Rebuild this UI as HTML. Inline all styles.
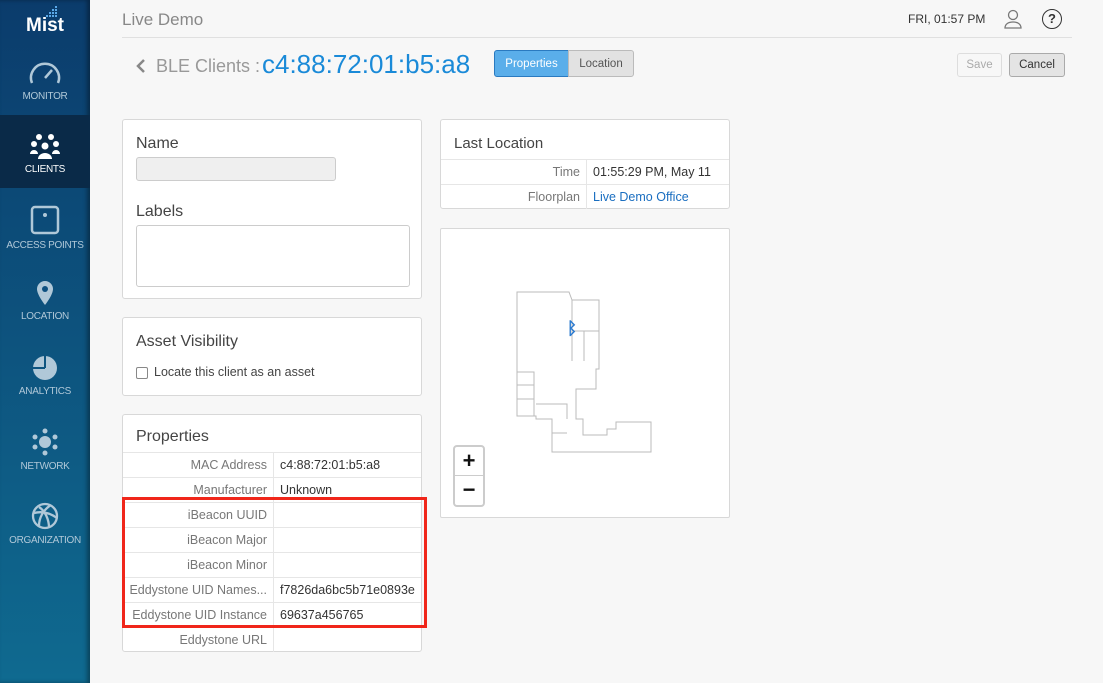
<!DOCTYPE html>
<html><head><meta charset="utf-8"><style>
*{box-sizing:border-box;margin:0;padding:0}
body{width:1103px;height:683px;overflow:hidden;background:#f7f7f7;font-family:"Liberation Sans",sans-serif;position:relative;color:#555}
.sb{position:absolute;left:0;top:0;width:90px;height:683px;background:linear-gradient(#0b3c6c,#0f6a90);box-shadow:inset -3px 0 4px rgba(0,0,0,.35)}
.nav{position:absolute;left:0;width:90px;text-align:center;font-size:10px;color:#b0c8d8;letter-spacing:-.3px}
.nav svg{display:block;margin:0 auto 5px}
.act{background:#0a2a48;color:#fff}
.a{position:absolute}
.panel{position:absolute;background:#fff;border:1px solid #d8d8d8;border-radius:3px}
.h{font-size:16px;color:#444}
.row{position:absolute;left:0;right:0;height:25px;border-top:1px solid #e6e6e6;font-size:12.5px}
.row .l{position:absolute;left:0;text-align:right;color:#777;top:5px}
.row .v{position:absolute;top:5px;color:#333}
.row .sep{position:absolute;top:0;bottom:0;border-left:1px solid #e6e6e6}
.btn{position:absolute;font-size:11.5px;text-align:center;border-radius:3px}
</style></head><body>
<div class="sb">
 <div class="a" style="left:31px;top:5px">
  <svg width="32" height="12"><g fill="#5aa8e8"><rect x="24" y="0" width="2" height="2"/><rect x="24" y="3" width="2" height="2"/><rect x="21" y="3" width="2" height="2"/><rect x="24" y="6" width="2" height="2"/><rect x="21" y="6" width="2" height="2"/><rect x="18" y="6" width="2" height="2"/><rect x="24" y="9" width="2" height="2"/><rect x="21" y="9" width="2" height="2"/><rect x="18" y="9" width="2" height="2"/><rect x="15" y="9" width="2" height="2"/></g></svg>
 </div>
 <div class="a" style="left:26px;top:15px;color:#fff;font-weight:bold;font-size:19px">Mist</div>
 <div class="nav" style="top:58px;height:56px"><svg width="36" height="28" viewBox="0 0 36 28"><path d="M5 25 A14 14 0 1 1 31 25" fill="none" stroke="#b0c8d8" stroke-width="2.5"/><path d="M18 20 L25 12" stroke="#b0c8d8" stroke-width="2.5"/></svg>MONITOR</div>
 <div class="nav act" style="top:115px;height:73px;padding-top:18px"><svg width="32" height="26" viewBox="0 0 32 26" fill="#fff"><circle cx="10" cy="4" r="3"/><circle cx="22" cy="4" r="3"/><circle cx="5" cy="11" r="3"/><circle cx="27" cy="11" r="3"/><circle cx="16" cy="13" r="3.5"/><path d="M1 21a4 4 0 0 1 8 0zM23 21a4 4 0 0 1 8 0zM9 26a7 6 0 0 1 14 0z"/></svg>CLIENTS</div>
 <div class="nav" style="top:205px"><svg width="30" height="30" viewBox="0 0 30 30"><rect x="2" y="2" width="26" height="26" rx="3" fill="none" stroke="#b0c8d8" stroke-width="2.5"/><circle cx="15" cy="10" r="2" fill="#b0c8d8"/></svg>ACCESS POINTS</div>
 <div class="nav" style="top:280px"><svg width="20" height="26" viewBox="0 0 20 26"><path d="M10 1a8 8 0 0 1 8 8c0 6-8 16-8 16S2 15 2 9a8 8 0 0 1 8-8z" fill="#b0c8d8"/><circle cx="10" cy="9" r="3" fill="#0d5080"/></svg>LOCATION</div>
 <div class="nav" style="top:355px"><svg width="26" height="26" viewBox="0 0 26 26"><circle cx="13" cy="13" r="12" fill="#b0c8d8"/><path d="M13 13V0M13 13H0" stroke="#0d5480" stroke-width="2"/></svg>ANALYTICS</div>
 <div class="nav" style="top:428px"><svg width="26" height="28" viewBox="0 0 26 28" fill="#b0c8d8"><circle cx="13" cy="3" r="2.5"/><circle cx="13" cy="25" r="2.5"/><circle cx="3" cy="9" r="2.5"/><circle cx="23" cy="9" r="2.5"/><circle cx="3" cy="19" r="2.5"/><circle cx="23" cy="19" r="2.5"/><circle cx="13" cy="14" r="6"/></svg>NETWORK</div>
 <div class="nav" style="top:502px"><svg width="28" height="28" viewBox="0 0 28 28" fill="none" stroke="#b0c8d8" stroke-width="2.3"><circle cx="14" cy="14" r="12"/><path d="M3 11c8-2 16 0 23 5M8 24c0-8 4-16 12-21M8 5c6 4 10 12 10 21"/></svg>ORGANIZATION</div>
</div>

<div class="a" style="left:122px;top:10px;font-size:17px;color:#888">Live Demo</div>
<div class="a" style="left:908px;top:12px;font-size:12px;color:#333">FRI, 01:57 PM</div>
<svg class="a" style="left:1004px;top:9px" width="18" height="20" viewBox="0 0 18 20" fill="none" stroke="#777" stroke-width="1.3"><circle cx="9" cy="6" r="4.5"/><path d="M1 19c0-4 3.5-6 8-6s8 2 8 6z"/></svg>
<div class="a" style="left:1042px;top:9px;width:20px;height:20px;border:1.6px solid #333;border-radius:50%;text-align:center;font-weight:bold;font-size:13px;line-height:17px;color:#333">?</div>
<div class="a" style="left:122px;top:37px;width:950px;border-top:1px solid #e0e0e0"></div>

<svg class="a" style="left:136px;top:59px" width="10" height="14" viewBox="0 0 10 14"><path d="M8 1L2 7l6 6" fill="none" stroke="#888" stroke-width="2.5"/></svg>
<div class="a" style="left:156px;top:56px;font-size:18px;color:#999">BLE Clients :</div>
<div class="a" style="left:262px;top:49px;font-size:26px;color:#1a8ad8">c4:88:72:01:b5:a8</div>
<div class="btn" style="left:494px;top:50px;width:75px;height:27px;background:#5aaeea;border:1px solid #2a7ac0;color:#fff;line-height:25px;padding-top:1px;border-radius:3px 0 0 3px">Properties</div>
<div class="btn" style="left:568px;top:50px;width:66px;height:27px;background:#e2e2e2;border:1px solid #bbb;color:#555;line-height:25px;padding-top:1px;border-radius:0 3px 3px 0">Location</div>
<div class="btn" style="left:957px;top:53px;width:45px;height:24px;border:1px solid #ddd;color:#aaa;line-height:22px">Save</div>
<div class="btn" style="left:1009px;top:53px;width:56px;height:24px;border:1px solid #aaa;background:#e4e4e4;color:#333;line-height:22px">Cancel</div>

<div class="panel" style="left:122px;top:119px;width:300px;height:180px">
 <div class="a h" style="left:13px;top:15px">Name</div>
 <div class="a" style="left:13px;top:37px;width:200px;height:24px;background:#efefef;border:1px solid #ccc;border-radius:3px"></div>
 <div class="a h" style="left:13px;top:83px">Labels</div>
 <div class="a" style="left:13px;top:105px;width:274px;height:62px;border:1px solid #ccc;border-radius:3px"></div>
</div>
<div class="panel" style="left:122px;top:317px;width:300px;height:79px">
 <div class="a h" style="left:13px;top:15px">Asset Visibility</div>
 <div class="a" style="left:13px;top:49px;width:12px;height:12px;border:1px solid #888;border-radius:2px"></div>
 <div class="a" style="left:31px;top:47px;font-size:12.5px;color:#444">Locate this client as an asset</div>
</div>
<div class="panel" style="left:122px;top:414px;width:300px;height:238px">
 <div class="a h" style="left:13px;top:13px">Properties</div>
 <div class="row" style="top:37px"><span class="l" style="width:144px">MAC Address</span><span class="sep" style="left:150px"></span><span class="v" style="left:157px">c4:88:72:01:b5:a8</span></div>
 <div class="row" style="top:62px"><span class="l" style="width:144px">Manufacturer</span><span class="sep" style="left:150px"></span><span class="v" style="left:157px">Unknown</span></div>
 <div class="row" style="top:87px"><span class="l" style="width:144px">iBeacon UUID</span><span class="sep" style="left:150px"></span></div>
 <div class="row" style="top:112px"><span class="l" style="width:144px">iBeacon Major</span><span class="sep" style="left:150px"></span></div>
 <div class="row" style="top:137px"><span class="l" style="width:144px">iBeacon Minor</span><span class="sep" style="left:150px"></span></div>
 <div class="row" style="top:162px"><span class="l" style="width:144px">Eddystone UID Names...</span><span class="sep" style="left:150px"></span><span class="v" style="left:157px">f7826da6bc5b71e0893e</span></div>
 <div class="row" style="top:187px"><span class="l" style="width:144px">Eddystone UID Instance</span><span class="sep" style="left:150px"></span><span class="v" style="left:157px">69637a456765</span></div>
 <div class="row" style="top:212px"><span class="l" style="width:144px">Eddystone URL</span><span class="sep" style="left:150px"></span></div>
</div>
<div class="a" style="left:122px;top:497px;width:305px;height:131px;border:3px solid #f0261a"></div>

<div class="panel" style="left:440px;top:119px;width:290px;height:90px">
 <div class="a h" style="left:13px;top:15px;font-size:15px">Last Location</div>
 <div class="row" style="top:39px"><span class="l" style="width:139px">Time</span><span class="sep" style="left:145px"></span><span class="v" style="left:152px">01:55:29 PM, May 11</span></div>
 <div class="row" style="top:64px"><span class="l" style="width:139px">Floorplan</span><span class="sep" style="left:145px"></span><span class="v" style="left:152px;color:#1a6ec0">Live Demo Office</span></div>
</div>
<div class="panel" style="left:440px;top:228px;width:290px;height:290px;border-radius:2px">
 <svg class="a" style="left:0;top:0" width="290" height="290" viewBox="440 228 290 290" fill="none" stroke="#bbb" stroke-width="1">
  <path d="M516 291H568L571 299H598V368H595V388H575V418H582V434H606V428H615V421H650V451H551V418H535V415H516Z"/>
  <path d="M571 299V360M571 330H598M583 330V360M516 371H533V415M516 384H533M516 398H533M535 403H566V418M551 432H566"/>
 </svg>
 <div class="a" style="left:126px;top:90px;color:#2a7ad0;font-size:17px;font-weight:bold">&#x16D2;</div>
 <div class="a" style="left:12px;top:216px;width:32px;height:62px;border:2px solid #ccc;border-radius:4px;background:#fff">
  <div style="height:29px;border-bottom:1px solid #ccc;text-align:center;font-size:22px;line-height:28px;color:#111;font-weight:bold">+</div>
  <div style="text-align:center;font-size:22px;line-height:28px;color:#111;font-weight:bold">−</div>
 </div>
</div>
</body></html>
